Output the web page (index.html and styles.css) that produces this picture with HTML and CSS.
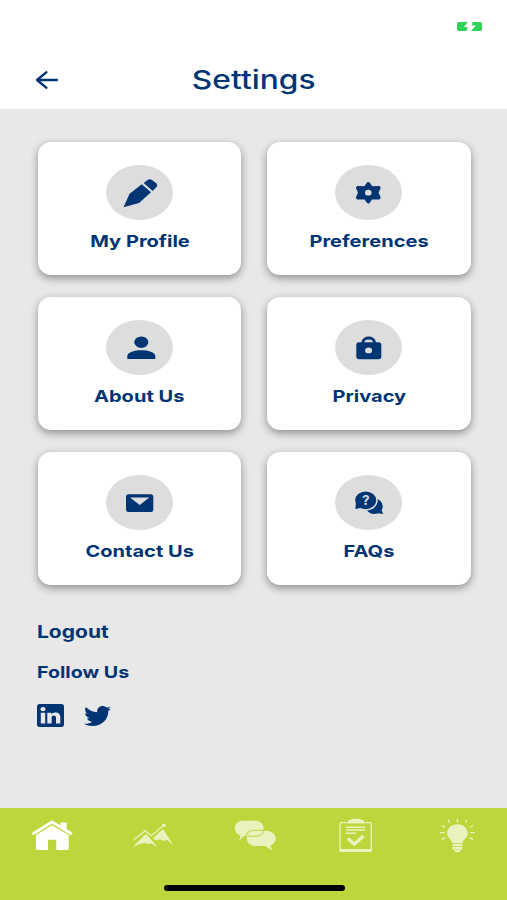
FILE: index.html
```html
<!DOCTYPE html>
<html lang="en">
<head>
<meta charset="utf-8">
<title>Settings</title>
<link rel="stylesheet" href="styles.css">
</head>
<body>
<div class="screen">
  <header class="header">
    <div class="status">
      <svg class="battery" viewBox="0 0 25 9"><path d="M2 0H10.800L7 5H10.500L9.500 9H2Q0 9 0 7V2Q0 0 2 0ZM15.500 0H23Q25 0 25 2V7Q25 9 23 9H14L19 3.500H14.800Z"/></svg>
    </div>
    <div class="titlebar">
      <svg class="back" viewBox="0 0 24 20"><path d="M22 10H2.500M11.500 2.200L2 10L11.500 17.800"/></svg>
      <h1 class="title"><span class="wide">Settings</span></h1>
    </div>
  </header>

  <main class="content">
    <div class="cards">
      <a class="card">
        <svg class="icon" viewBox="0 0 67 55"><path d="M17.500 42.300L23.600 28.700L35.800 19.200L45 27.300L33 38Z"/><path d="M37.700 17.900L41.500 14.900Q43.500 13.500 46 14.900L50.500 18.500Q52 20.200 50.500 22L46.700 26Z"/></svg>
        <span class="label">My Profile</span>
      </a>
      <a class="card">
        <svg class="icon" viewBox="0 0 67 55"><path class="gear" d="M33.300 18.800L36.300 23L43.800 22.800L41.600 27.700L43.800 32.600L36.300 32.400L33.300 36.600L30.300 32.400L22.800 32.600L25 27.700L22.800 22.800L30.300 23Z"/><ellipse class="hole" cx="33.300" cy="27.700" rx="3.300" ry="2.900"/></svg>
        <span class="label">Preferences</span>
      </a>
      <a class="card">
        <svg class="icon" viewBox="0 0 67 55"><ellipse cx="35.300" cy="22.200" rx="7" ry="5.800"/><path d="M21.300 39V36.200C21.300 32 29 30.300 35.300 30.300S49.300 32 49.300 36.200V39Z"/></svg>
        <span class="label">About Us</span>
      </a>
      <a class="card">
        <svg class="icon" viewBox="0 0 67 55"><rect x="21.300" y="22.300" width="25" height="17" rx="2.800"/><path class="shackle" d="M27.900 24V22.500C27.900 16.500 39.500 16.500 39.500 22.500V24"/><ellipse class="hole" cx="33.600" cy="30.400" rx="3.500" ry="2.900"/></svg>
        <span class="label">Privacy</span>
      </a>
      <a class="card">
        <svg class="icon" viewBox="0 0 67 55"><rect x="20" y="19.300" width="27.300" height="17.700" rx="2.500"/><path class="hole" d="M24 22.600H43.300L33.700 30Z"/></svg>
        <span class="label">Contact Us</span>
      </a>
      <a class="card">
        <svg class="icon" viewBox="0 0 67 55"><ellipse cx="39.200" cy="31.300" rx="8.500" ry="7.700"/><path d="M45.500 33L48.200 39L41 38Z"/><ellipse class="ring" cx="30.700" cy="25.300" rx="11.300" ry="9.600"/><path d="M21 28L20.300 34L28 32.500Z"/><text class="question" x="31" y="29.700">?</text></svg>
        <span class="label">FAQs</span>
      </a>
    </div>

    <div class="links">
      <a class="link logout">Logout</a>
      <a class="link follow">Follow Us</a>
      <div class="social">
        <svg class="linkedin" viewBox="0 0 27 23"><rect width="27" height="23" rx="2.500"/><ellipse class="cut" cx="6" cy="5.200" rx="2.500" ry="2.100"/><path class="cut" d="M3.800 8.700H8.200V19.500H3.800ZM10.300 8.700H14.400V10.200C16.500 7.500 23.300 7.500 23.300 13V19.500H19V13.800C19 10.800 14.600 10.900 14.600 13.800V19.500H10.300Z"/></svg>
        <svg class="twitter" viewBox="0 48 512 416" preserveAspectRatio="none"><path d="M459.370 151.716c.325 4.548.325 9.097.325 13.645 0 138.720-105.583 298.558-298.558 298.558-59.452 0-114.680-17.219-161.137-47.106 8.447.974 16.568 1.299 25.340 1.299 49.055 0 94.213-16.568 130.274-44.832-46.132-.975-84.792-31.188-98.112-72.772 6.498.974 12.995 1.624 19.818 1.624 9.421 0 18.843-1.300 27.614-3.573-48.081-9.747-84.143-51.980-84.143-102.985v-1.299c13.969 7.797 30.214 12.670 47.431 13.319-28.264-18.843-46.781-51.005-46.781-87.391 0-19.492 5.197-37.360 14.294-52.954 51.655 63.675 129.300 105.258 216.365 109.807-1.624-7.797-2.599-15.918-2.599-24.040 0-57.828 46.782-104.934 104.934-104.934 30.213 0 57.502 12.670 76.670 33.137 23.715-4.548 46.456-13.320 66.599-25.340-7.798 24.366-24.366 44.833-46.132 57.827 21.117-2.273 41.584-8.122 60.426-16.243-14.292 20.791-32.161 39.308-52.628 54.253z"/></svg>
      </div>
    </div>
  </main>

  <nav class="nav">
    <div class="tabs">
      <svg class="tab active" viewBox="0 0 48 36"><path class="line roof" d="M5.500 15.500L24 4L43 15.500"/><path d="M32.300 8V4.500H38.700V12Z"/><path d="M8 17L24 7.300L40.700 17V30.500Q40.700 32 39 32H28.300V21.700H20V32H9.500Q8 32 8 30.500Z"/></svg>
      <svg class="tab" viewBox="0 0 48 36"><path class="line thin" d="M4.500 22L16.300 12.700L22.300 17.700L34.500 7.500"/><circle cx="35" cy="7.300" r="1.800"/><path d="M17 15.800L28.500 29L21.500 25.200L18.500 26.300L16 24.800L11 26L4 29.300L8.500 24Z"/><path d="M34 11L44.500 27.300L38 21.800L34.500 23L31 21.200L27 22.500L24 20.300Z"/></svg>
      <svg class="tab" viewBox="0 0 48 36"><path d="M12 2.700H24C29 2.700 33 5.500 32.700 11.800H25C19.500 11.800 15.300 13.500 14.700 17.900L12.700 18L8.200 22.700L9.500 17.500C1.500 15.500 1.500 2.700 12 2.700Z"/><path d="M15.700 17.700C16.500 14 20 12.700 25 12.700H35C46.500 12.700 47.500 25.500 39.500 27.200L41 32.700L34.500 28H25C18 28 15 23 15.700 17.700Z"/><path class="gap" d="M15 18.200H24C29.500 18.200 32 16 32.700 12.200"/></svg>
      <svg class="tab" viewBox="0 0 48 36"><rect class="line frame" x="8.100" y="4.700" width="31.200" height="28.600" rx="1"/><path d="M7.500 31H39.800V33.300Q39.800 34 39 34H8.300Q7.500 34 7.500 33.300ZM15.800 5.300V3Q15.800 2 17 2H18.500Q19.500.8 21.500.8H26.500Q28.500.8 29.500 2H30.800Q31.900 2 31.900 3V5.300Z"/><path class="line text-lines" d="M13.800 9.300H33.100M13.800 12H33.100M13.800 15.200H23.800"/><path class="line check" d="M15.800 20.500L22.300 26L31.500 18"/></svg>
      <svg class="tab" viewBox="0 0 48 36"><path d="M23.400 6.300C29.300 6.300 33.700 10.200 33.700 15.300C33.700 20 29 21 28.600 25.200H18.200C17.800 21 13.100 20 13.100 15.300C13.100 10.200 17.500 6.300 23.400 6.300ZM18.500 26H28.400V28.300H18.500ZM18.500 29.100H28.400V31.400H18.500ZM20 32.100H26.900L25.500 34.300H21.400Z"/><path class="line thin" d="M23.400 1V4.200M14 1.800L15.500 4.600M32.800 1.800L31.300 4.600M7.800 7.500L11 9.500M39 7.500L35.800 9.500M6 14.600H10.500M36.300 14.600H40.800M7.500 21.700L11 19.700M39.300 21.700L35.800 19.700"/></svg>
    </div>
    <div class="home-bar"></div>
  </nav>
</div>
</body>
</html>
```
FILE: styles.css
```css
* { box-sizing: border-box; }
body {
  margin: 0;
  color: #003574;
  font-family: Inter, "Liberation Sans", sans-serif;
}
svg { display: block; fill: currentColor; }

.screen {
  display: flex;
  flex-direction: column;
  height: 900px;
  background: #e8e8e8;
  overflow: hidden;
}

.header { height: 109px; background: #fff; }
.status {
  display: flex;
  justify-content: flex-end;
  height: 50px;
  padding: 22px 25px 0 0;
  color: #30d158;
}
.battery { width: 25px; height: 9px; }
.titlebar {
  display: grid;
  grid-template-columns: 60px 1fr 60px;
  align-items: center;
  height: 60px;
}
.back {
  width: 24px;
  height: 20px;
  margin-left: 35px;
  fill: none;
  stroke: currentColor;
  stroke-width: 2.3;
  stroke-linecap: round;
  stroke-linejoin: round;
}
.title {
  margin: 0;
  font-size: 26px;
  font-weight: 500;
  line-height: 32px;
  text-align: center;
}
.wide { display: inline-block; transform: scaleX(1.22); }

.content { flex: 1; padding: 33px 36.500px 0 38px; }
.cards {
  display: grid;
  grid-template-columns: 1fr 1fr;
  grid-auto-rows: 133px;
  gap: 22px 26px;
}
.card {
  display: flex;
  flex-direction: column;
  align-items: center;
  padding-top: 23px;
  border-radius: 13px;
  background: #fff;
  box-shadow: 0 3px 8px rgba(0, 0, 0, 0.4);
}
.icon {
  width: 67px;
  height: 55px;
  border-radius: 50%;
  background: #ddd;
}
.hole { fill: #ddd; }
.gear { stroke: currentColor; stroke-width: 3.600; stroke-linejoin: round; }
.shackle { fill: none; stroke: currentColor; stroke-width: 2.8; }
.ring { stroke: #ddd; stroke-width: 1.5; }
.question { fill: #ddd; font-size: 13px; font-weight: 700; text-anchor: middle; }
.label {
  margin-top: 10px;
  font-size: 16.500px;
  font-weight: 700;
  line-height: 22px;
  white-space: nowrap;
  transform: scaleX(1.215);
}

.links {
  display: flex;
  flex-direction: column;
  align-items: flex-start;
  margin: 35px 0 0 -1.500px;
}
.link {
  font-weight: 700;
  line-height: 24px;
  transform-origin: left;
}
.logout { font-size: 17.500px; transform: scaleX(1.2); }
.follow { margin-top: 16px; font-size: 16.500px; transform: scaleX(1.19); }
.social { display: flex; gap: 20px; margin-top: 20px; }
.linkedin { width: 27px; height: 23px; }
.twitter { width: 27px; height: 20px; margin-top: 2px; }
.cut { fill: #e8e8e8; }

.nav {
  height: 92px;
  padding-top: 10px;
  background: #bdd63b;
}
.tabs { display: grid; grid-template-columns: repeat(5, 1fr); justify-items: center; }
.tab { width: 48px; height: 36px; margin-left: 2.600px; color: #eaf3be; }
.active { color: #fff; }
.line { fill: none; stroke: currentColor; stroke-width: 1.3; }
.roof { stroke-width: 2.8; stroke-linecap: round; }
.active path:last-child { stroke: #bdd63b; stroke-width: 1; paint-order: stroke; }
.thin { stroke-width: 1.4; }
.text-lines { stroke-width: 1.5; }
.check { stroke-width: 3.4; }
.gap { fill: none; stroke: #bdd63b; stroke-width: 1; }
.home-bar {
  width: 181px;
  height: 6px;
  margin: 31px 0 0 164px;
  border-radius: 3px;
  background: #000;
}
```
